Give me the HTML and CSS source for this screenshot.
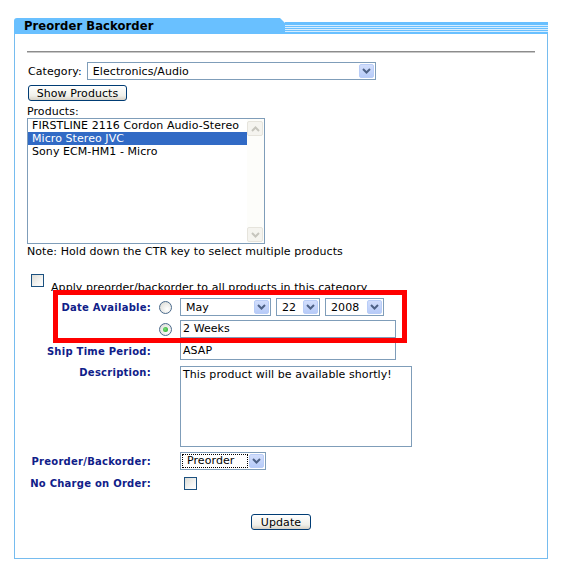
FILE: index.html
```html
<!DOCTYPE html>
<html lang="en">
<head>
    <meta charset="UTF-8">
    <title>Preorder Backorder</title>
    <link rel="stylesheet" href="styles.css">
</head>
<body>
    <div class="panel">
        <div class="panel-head">
            <div class="panel-tab">Preorder Backorder</div>
            <div class="panel-stripes"></div>
        </div>
        <div class="panel-body">
            <hr class="rule">

            <div class="category-row">
                <span>Category:</span>
                <div class="select select-category">
                    <span class="select-text">Electronics/Audio</span>
                    <span class="drop"><svg width="9" height="6" viewBox="0 0 9 6"><path d="M1 1 L4.5 4.5 L8 1" fill="none" stroke="#4d6185" stroke-width="2"/></svg></span>
                </div>
            </div>
            <button class="btn btn-show">Show Products</button>

            <div class="products-label">Products:</div>
            <div class="listbox">
                <ul class="options">
                    <li>FIRSTLINE 2116 Cordon Audio-Stereo</li>
                    <li class="selected">Micro Stereo JVC</li>
                    <li>Sony ECM-HM1 - Micro</li>
                </ul>
                <div class="scrollbar">
                    <span class="scroll-btn"><svg width="9" height="6" viewBox="0 0 9 6"><path d="M1 5 L4.5 1.5 L8 5" fill="none" stroke="#c6c5bd" stroke-width="2"/></svg></span>
                    <span class="scroll-btn"><svg width="9" height="6" viewBox="0 0 9 6"><path d="M1 1 L4.5 4.5 L8 1" fill="none" stroke="#c6c5bd" stroke-width="2"/></svg></span>
                </div>
            </div>
            <p class="note">Note: Hold down the CTR key to select multiple products</p>

            <div class="apply-row">
                <span class="checkbox"></span>
                <span class="apply-text">Apply preorder/backorder to all products in this category</span>
            </div>

            <div class="form-grid">
                <div class="label">Date Available:</div>
                <div class="radio-cell"><span class="radio"></span></div>
                <div class="field date-selects">
                    <div class="select select-month">
                        <span class="select-text">May</span>
                        <span class="drop"><svg width="9" height="6" viewBox="0 0 9 6"><path d="M1 1 L4.5 4.5 L8 1" fill="none" stroke="#4d6185" stroke-width="2"/></svg></span>
                    </div>
                    <div class="select select-day">
                        <span class="select-text">22</span>
                        <span class="drop"><svg width="9" height="6" viewBox="0 0 9 6"><path d="M1 1 L4.5 4.5 L8 1" fill="none" stroke="#4d6185" stroke-width="2"/></svg></span>
                    </div>
                    <div class="select select-year">
                        <span class="select-text">2008</span>
                        <span class="drop"><svg width="9" height="6" viewBox="0 0 9 6"><path d="M1 1 L4.5 4.5 L8 1" fill="none" stroke="#4d6185" stroke-width="2"/></svg></span>
                    </div>
                </div>

                <div class="radio-cell"><span class="radio checked"></span></div>
                <div class="field input">2 Weeks</div>

                <div class="label">Ship Time Period:</div>
                <div class="field input">ASAP</div>

                <div class="label label-top">Description:</div>
                <div class="field textarea">This product will be available shortly!</div>

                <div class="label label-preorder">Preorder/Backorder:</div>
                <div class="field">
                    <div class="select select-type">
                        <span class="select-text focused">Preorder</span>
                        <span class="drop"><svg width="9" height="6" viewBox="0 0 9 6"><path d="M1 1 L4.5 4.5 L8 1" fill="none" stroke="#4d6185" stroke-width="2"/></svg></span>
                    </div>
                </div>

                <div class="label label-charge">No Charge on Order:</div>
                <div class="field field-charge"><span class="checkbox checkbox-charge"></span></div>
            </div>

            <div class="actions">
                <button class="btn btn-update">Update</button>
            </div>

            <div class="highlight"></div>
        </div>
    </div>
</body>
</html>
```

FILE: styles.css
```css
body {
    margin: 0;
    background: #fff;
    color: #000;
    font-family: "DejaVu Sans", Verdana, sans-serif;
    font-size: 11px;
    line-height: 13px;
    letter-spacing: 0.07px;
}
.panel {
    width: 534px;
    margin: 18px 0 0 14px;
}
.panel-head {
    display: flex;
    align-items: flex-end;
    height: 16px;
}
.panel-tab {
    width: 271px;
    height: 16px;
    box-sizing: border-box;
    padding-left: 10px;
    background: #69c0ff;
    border-top-left-radius: 3px;
    clip-path: polygon(0 0, 266px 0, 271px 5px, 271px 100%, 0 100%);
    font-size: 11.6px;
    font-weight: bold;
    line-height: 17px;
    color: #000;
}
.panel-stripes {
    flex: 1;
    height: 12px;
    background: linear-gradient(to bottom,
        #69c0ff 0, #69c0ff 3px,
        #d6edff 3px, #d6edff 4px,
        #69c0ff 4px, #69c0ff 5px,
        #d6edff 5px, #d6edff 6px,
        #69c0ff 6px, #69c0ff 7px,
        #d6edff 7px, #d6edff 8px,
        #69c0ff 8px, #69c0ff 9px,
        #d6edff 9px, #d6edff 10px,
        #69c0ff 10px);
}
.panel-body {
    position: relative;
    border: 1px solid #76bcef;
    border-top: none;
    padding: 17px 12px 28px 12px;
}
.rule {
    margin: 0 0 9px 0;
    height: 0;
    border: none;
    border-top: 1px solid #8c8c8c;
    border-bottom: 1px solid #c8c8c8;
}

/* selects, inputs */
.select {
    display: flex;
    align-items: center;
    height: 18px;
    box-sizing: border-box;
    border: 1px solid #7f9db9;
    background: #fff;
}
.select-text {
    flex: 1;
    padding-left: 5px;
    white-space: nowrap;
}
.drop {
    display: flex;
    align-items: center;
    justify-content: center;
    width: 15px;
    height: 14px;
    margin-right: 1px;
    box-sizing: border-box;
    border: 1px solid #b9cdf7;
    border-radius: 2px;
    background: linear-gradient(#d2defc, #b7cbf8);
}
.category-row {
    display: flex;
    align-items: center;
    gap: 5px;
    padding-left: 1px;
}
.select-category {
    width: 289px;
}
.btn {
    height: 16px;
    padding: 0 9px;
    border: 1px solid #003c74;
    border-radius: 3px;
    background: linear-gradient(#ffffff, #f0f0ea 70%, #d6d0c5);
    font-family: "DejaVu Sans", Verdana, sans-serif;
    font-size: 11px;
    line-height: 13px;
    letter-spacing: 0.07px;
    color: #000;
}
.btn-show {
    display: block;
    width: 99px;
    margin: 5px 0 0 1px;
    padding: 0;
}
.products-label {
    margin-top: 4px;
}
.listbox {
    display: flex;
    width: 238px;
    height: 126px;
    box-sizing: border-box;
    border: 1px solid #7f9db9;
    background: #fff;
}
.options {
    flex: 1;
    margin: 0;
    padding: 0;
    list-style: none;
}
.options li {
    height: 13px;
    padding-left: 4px;
    white-space: nowrap;
}
.options li.selected {
    background: #316ac5;
    color: #fff;
}
.scrollbar {
    display: flex;
    flex-direction: column;
    justify-content: space-between;
    width: 17px;
    padding: 2px 0 1px 0;
    background: #fdfdfa;
}
.scroll-btn {
    display: flex;
    align-items: center;
    justify-content: center;
    width: 16px;
    height: 15px;
    box-sizing: border-box;
    border: 1px solid #e6e4dc;
    border-radius: 2px;
    background: #f5f4ef;
}
.note {
    margin: 1px 0 0 0;
}
.apply-row {
    display: flex;
    align-items: flex-start;
    gap: 7px;
    margin-top: 16px;
    padding-left: 4px;
}
.apply-text {
    margin-top: 7px;
}
.checkbox {
    display: block;
    width: 13px;
    height: 13px;
    box-sizing: border-box;
    border: 1px solid #1c5180;
    background: linear-gradient(135deg, #dcdcd6, #f4f4f2 60%, #fff);
}

/* the form */
.form-grid {
    display: grid;
    grid-template-columns: 124px 29px auto;
    row-gap: 4px;
    align-items: center;
    margin-top: 4px;
}
.label {
    grid-column: 1;
    text-align: right;
    font-size: 10px;
    font-weight: bold;
    letter-spacing: 0.25px;
    color: #0f2089;
}
.label-top {
    align-self: start;
    margin-top: 2px;
}
.radio-cell {
    grid-column: 2;
    display: flex;
    justify-content: center;
}
.field {
    grid-column: 3;
    justify-self: start;
}
.radio {
    display: block;
    width: 13px;
    height: 13px;
    box-sizing: border-box;
    border: 1px solid #4a6a8c;
    border-radius: 50%;
    background: radial-gradient(circle at 65% 65%, #fff, #e8e8e4 60%, #d0d0ca);
    position: relative;
}
.radio.checked::after {
    content: "";
    position: absolute;
    left: 3px;
    top: 3px;
    width: 5px;
    height: 5px;
    border-radius: 50%;
    background: radial-gradient(circle at 40% 40%, #7ade7a, #21a121);
}
.date-selects {
    display: flex;
    gap: 5px;
}
.select-month {
    width: 91px;
}
.select-day {
    width: 44px;
}
.select-year {
    width: 59px;
}
.input {
    width: 216px;
    height: 18px;
    box-sizing: border-box;
    border: 1px solid #7f9db9;
    padding-left: 2px;
    line-height: 16px;
}
.textarea {
    width: 232px;
    height: 81px;
    box-sizing: border-box;
    border: 1px solid #7f9db9;
    padding: 1px 2px;
    margin-top: 2px;
}
.label-preorder,
.select-type {
    margin-top: 1px;
}
.select-type {
    width: 86px;
}
.select-type .select-text {
    margin: 0 2px;
    padding-left: 4px;
    outline: 1px dotted #000;
    line-height: 12px;
}
.field-charge,
.label-charge {
    margin-top: 3px;
}
.checkbox-charge {
    margin-left: 4px;
}
.actions {
    display: flex;
    justify-content: center;
    margin-top: 24px;
}
.btn-update {
    width: 60px;
    padding: 0;
}
.highlight {
    position: absolute;
    left: 38px;
    top: 256px;
    width: 354px;
    height: 53px;
    box-sizing: border-box;
    border: 5px solid #ff0000;
    pointer-events: none;
}
```
